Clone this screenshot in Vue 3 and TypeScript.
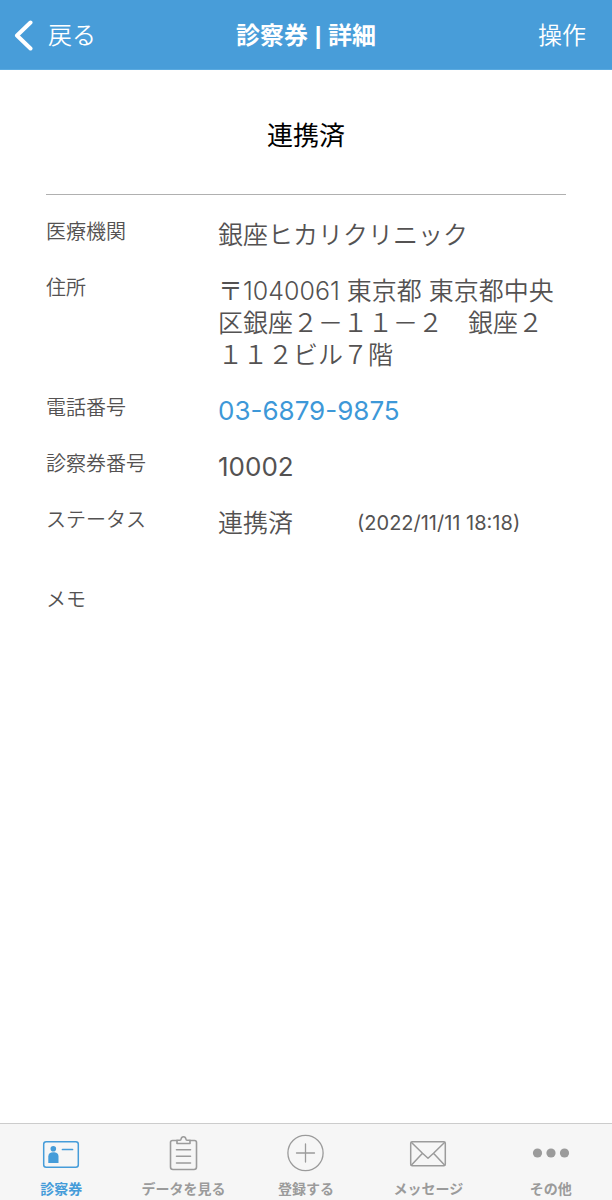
<script setup lang="ts">
interface Detail {
  label: string
  value: string
  href?: string
  note?: string
  numeric?: boolean
}

interface Tab {
  id: 'card' | 'data' | 'add' | 'message' | 'more'
  label: string
}

const details: Detail[] = [
  { label: '医療機関', value: '銀座ヒカリクリニック' },
  { label: '住所', value: '〒1040061 東京都 東京都中央区銀座２－１１－２　銀座２１１２ビル７階' },
  { label: '電話番号', value: '03-6879-9875', href: 'tel:03-6879-9875', numeric: true },
  { label: '診察券番号', value: '10002', numeric: true },
  { label: 'ステータス', value: '連携済', note: '(2022/11/11 18:18)' },
  { label: 'メモ', value: '' },
]

const tabs: Tab[] = [
  { id: 'card', label: '診察券' },
  { id: 'data', label: 'データを見る' },
  { id: 'add', label: '登録する' },
  { id: 'message', label: 'メッセージ' },
  { id: 'more', label: 'その他' },
]

const activeTab: Tab['id'] = 'card'
</script>

<template>
  <div class="screen" lang="ja">
    <header class="bar">
      <button type="button" class="back">
        <svg class="chevron" width="20" height="32" viewBox="0 0 20 32" aria-hidden="true">
          <path d="M16.5 2.5 3 15.5l13.5 13" />
        </svg>
        <span>戻る</span>
      </button>
      <h1 class="title">診察券 | 詳細</h1>
      <button type="button" class="action">操作</button>
    </header>

    <main class="content">
      <h2 class="status">連携済</h2>
      <dl class="details">
        <div v-for="item in details" :key="item.label" class="row" :class="{ memo: !item.value }">
          <dt>{{ item.label }}</dt>
          <dd :class="{ numeric: item.numeric }">
            <a v-if="item.href" :href="item.href">{{ item.value }}</a>
            <span v-else>{{ item.value }}</span>
            <span v-if="item.note" class="note">{{ item.note }}</span>
          </dd>
        </div>
      </dl>
    </main>

    <nav class="tabs">
      <button
        v-for="tab in tabs"
        :key="tab.id"
        type="button"
        class="tab"
        :class="{ active: tab.id === activeTab }"
      >
        <svg class="icon" width="40" height="40" viewBox="0 0 40 40" aria-hidden="true">
          <g v-if="tab.id === 'card'">
            <rect x="2.7" y="8.7" width="34.6" height="25.6" rx="2.5" stroke-width="1.5" />
            <circle class="solid" cx="12.3" cy="15.8" r="2.8" />
            <path class="solid" d="M7.3 30v-6.5c0-3 2-4.2 5-4.2s5.2 1.2 5.2 4.2V30z" />
            <path d="M21.5 16.5h10" stroke-width="1.7" />
          </g>
          <g v-else-if="tab.id === 'data'" stroke-width="1.6">
            <path d="M13 7.5H8.5a2 2 0 0 0-2 2V34a2.5 2.5 0 0 0 2.5 2.5h21a2.5 2.5 0 0 0 2.5-2.5V9.5a2 2 0 0 0-2-2H26" />
            <path d="M13 10.5V7.3h3c.8 0 1-.5 1.1-1.3.2-1.5 1-2.3 2.4-2.3s2.2.8 2.4 2.3c.1.8.3 1.3 1.1 1.3h3v3.2z" />
            <path d="M12.5 16.7h14M12.5 23.3h14M12.5 30h14" />
          </g>
          <g v-else-if="tab.id === 'add'" stroke-width="1.3">
            <circle cx="19.5" cy="20" r="17.6" />
            <path d="M10.5 20h18M19.5 11v18" />
          </g>
          <g v-else-if="tab.id === 'message'" stroke-width="1.5">
            <rect x="2.7" y="8.7" width="34.6" height="24" rx="1.5" />
            <path d="M3.5 9.5 14.5 20.2l5.5 5 5.5-5L36.5 9.5M3.5 32l11-11.8M36.5 32l-11-11.8" />
          </g>
          <g v-else>
            <circle class="solid" cx="6.5" cy="20" r="4.6" />
            <circle class="solid" cx="20" cy="20" r="4.6" />
            <circle class="solid" cx="33.5" cy="20" r="4.6" />
          </g>
        </svg>
        <span>{{ tab.label }}</span>
      </button>
    </nav>
  </div>
</template>

<style>
body {
  margin: 0;
  background: #fff;
}
</style>

<style scoped>
.screen {
  display: flex;
  flex-direction: column;
  min-height: 100vh;
  font-family: Inter, "Noto Sans CJK JP", sans-serif;
  font-weight: 350;
  color: #545252;
}

button {
  margin: 0;
  padding: 0;
  border: 0;
  background: none;
  font: inherit;
  color: inherit;
  cursor: pointer;
}

.bar {
  display: grid;
  grid-template-columns: 1fr auto 1fr;
  align-items: center;
  box-sizing: border-box;
  height: 70px;
  padding: 2px 26px 0 14px;
  border-bottom: 1px solid #5aaae0;
  background: #489dd9;
  color: #fff;
  font-size: 24px;
  line-height: 32px;
}

.back {
  display: flex;
  align-items: center;
  gap: 14px;
  justify-self: start;
}

.chevron {
  fill: none;
  stroke: #fff;
  stroke-width: 4;
  stroke-linecap: round;
  stroke-linejoin: round;
}

.title {
  margin: 0 0 0 12px;
  font-family: "Liberation Sans", "Noto Sans CJK JP", sans-serif;
  font-size: 24px;
  font-weight: 700;
}

.action {
  justify-self: end;
}

.content {
  flex: 1;
  padding: 0 46px;
}

.status {
  margin: 0;
  padding: 48px 0 40px;
  border-bottom: 1px solid #b0b0b0;
  color: #000;
  font-size: 26px;
  font-weight: 400;
  line-height: 36px;
  text-align: center;
}

.details {
  display: flex;
  flex-direction: column;
  gap: 24px;
  margin: 24px 0;
}

.row {
  display: grid;
  grid-template-columns: 172px 1fr;
}

.memo {
  margin-top: 24px;
}

dt {
  font-size: 20px;
  line-height: 26px;
}

dd {
  display: flex;
  align-items: center;
  gap: 64px;
  margin: 0;
  font-size: 25px;
  line-height: 32px;
}

dd a {
  color: #3d98d8;
  text-decoration: none;
}

.numeric {
  font-size: 26px;
  font-weight: 400;
}

.note {
  font-size: 20px;
  font-weight: 400;
}

.tabs {
  display: grid;
  grid-template-columns: repeat(5, 1fr);
  box-sizing: border-box;
  height: 77px;
  border-top: 1px solid #ccc;
  background: #f6f6f6;
}

.tab {
  display: flex;
  flex-direction: column;
  align-items: center;
  gap: 6px;
  padding-top: 9px;
  color: #9b9b9b;
  font-size: 14px;
  font-weight: 700;
  line-height: 20px;
  white-space: nowrap;
}

.active {
  color: #459cd9;
}

.icon {
  flex: none;
  fill: none;
  stroke: currentColor;
  stroke-linecap: round;
  stroke-linejoin: round;
}

.solid {
  fill: currentColor;
  stroke: none;
}
</style>
